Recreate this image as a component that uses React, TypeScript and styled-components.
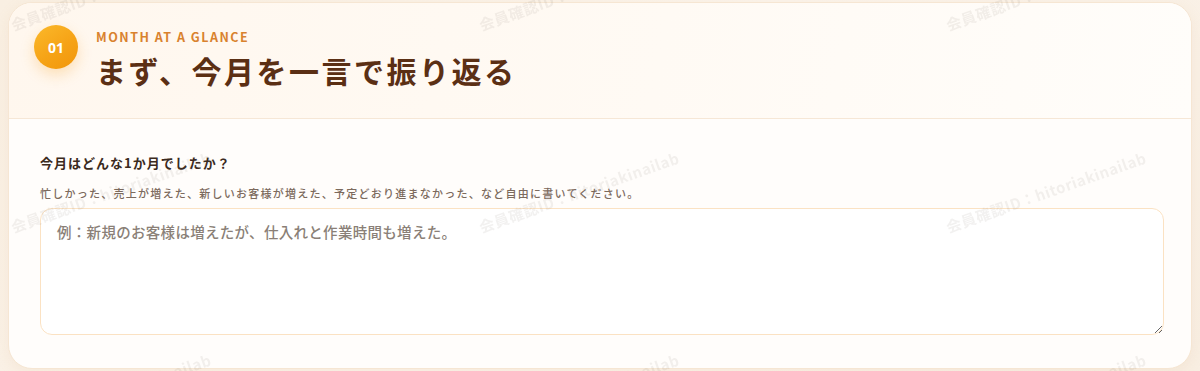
import React from "react";
import styled, { createGlobalStyle } from "styled-components";

const GlobalStyle = createGlobalStyle`
  html, body {
    margin: 0;
    padding: 0;
  }
  body {
    background: linear-gradient(135deg, #f9efe2 0%, #fbf3ea 50%, #f8eee2 100%);
    font-family: "Noto Sans CJK JP", "Noto Sans", sans-serif;
    color: #3d2a1e;
  }
`;

const Page = styled.div`
  padding: 2px 8px 3px;
  min-height: 371px;
  box-sizing: border-box;
`;

const Card = styled.section`
  background: #fffdfb;
  border: 1px solid #f6e6d3;
  border-radius: 24px;
  overflow: hidden;
  box-shadow: 0 4px 14px rgba(214, 170, 120, 0.12);
`;

const Header = styled.header`
  display: flex;
  align-items: flex-start;
  gap: 18px;
  height: 116px;
  box-sizing: border-box;
  padding: 22px 25px 0;
  background: linear-gradient(100deg, #fff7ee 0%, #fffaf4 55%, #fffdfa 100%);
  border-bottom: 1px solid #f6e7d6;
`;

const Badge = styled.div`
  flex: none;
  width: 44px;
  height: 44px;
  border-radius: 50%;
  background: linear-gradient(145deg, #fbb92b 0%, #f6a316 55%, #f1960a 100%);
  box-shadow: 0 6px 14px rgba(245, 160, 40, 0.28);
  color: #fff;
  font-size: 14px;
  font-weight: 700;
  display: flex;
  align-items: center;
  justify-content: center;
  font-family: "Noto Sans", "Noto Sans CJK JP", sans-serif;
`;

const HeadText = styled.div`
  display: flex;
  flex-direction: column;
  padding-top: 3px;
`;

const Eyebrow = styled.div`
  font-size: 12.5px;
  font-weight: 600;
  letter-spacing: 1.5px;
  color: #d9822e;
  line-height: 18px;
`;

const Title = styled.h2`
  margin: 4px 0 0;
  font-size: 30px;
  font-weight: 700;
  letter-spacing: 2.5px;
  line-height: 40px;
  color: #5b2f14;
`;

const Body = styled.div`
  padding: 34px 27px 33px 31px;
`;

const Label = styled.div`
  font-size: 13px;
  font-weight: 700;
  letter-spacing: 1px;
  line-height: 20px;
  color: #3b2a20;
`;

const Hint = styled.div`
  margin-top: 12px;
  font-size: 11px;
  font-weight: 500;
  letter-spacing: 1.25px;
  line-height: 16px;
  color: #7c6a5d;
`;

const Field = styled.textarea`
  display: block;
  margin-top: 7px;
  width: 100%;
  height: 127px;
  box-sizing: border-box;
  border: 1px solid #fbe2c3;
  border-radius: 12px;
  padding: 12px 16px;
  font-family: "Noto Sans CJK JP", "Noto Sans", sans-serif;
  font-size: 14.5px;
  font-weight: 500;
  letter-spacing: 0.3px;
  line-height: 22px;
  color: #3b2a20;
  background: #fff;
  outline: none;
  resize: vertical;

  &::placeholder {
    color: #8a7f77;
  }
`;

const Watermarks = styled.div`
  position: fixed;
  inset: 0;
  pointer-events: none;
  overflow: hidden;
`;

const Mark = styled.span`
  position: absolute;
  white-space: nowrap;
  font-family: "Noto Sans CJK JP", "Noto Sans", sans-serif;
  font-size: 15px;
  font-weight: 700;
  letter-spacing: 0.5px;
  color: rgba(110, 95, 85, 0.09);
  transform: rotate(-19.5deg);
  transform-origin: 0 100%;
  line-height: 20px;
`;

const markText = "会員確認ID：hitoriakinailab";
const cols = [15, 483, 950];
const rows = [35, 237, 439];

export default function App() {
  return (
    <>
      <GlobalStyle />
      <Page>
        <Card>
          <Header>
            <Badge>01</Badge>
            <HeadText>
              <Eyebrow>MONTH AT A GLANCE</Eyebrow>
              <Title>まず、今月を一言で振り返る</Title>
            </HeadText>
          </Header>
          <Body>
            <Label>今月はどんな1か月でしたか？</Label>
            <Hint>
              忙しかった、売上が増えた、新しいお客様が増えた、予定どおり進まなかった、など自由に書いてください。
            </Hint>
            <Field placeholder="例：新規のお客様は増えたが、仕入れと作業時間も増えた。" />
          </Body>
        </Card>
      </Page>
      <Watermarks>
        {rows.map((y) =>
          cols.map((x) => (
            <Mark key={`${x}-${y}`} style={{ left: x, top: y - 20 }}>
              {markText}
            </Mark>
          ))
        )}
      </Watermarks>
    </>
  );
}
